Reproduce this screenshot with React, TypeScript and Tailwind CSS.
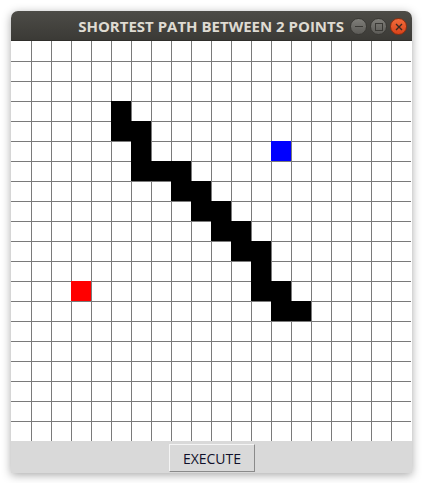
const SIZE = 20;

// filled cells: "col,row" -> colour
const filled: Record<string, string> = {};
const path: [number, number][] = [
  [5, 3],
  [5, 4], [6, 4],
  [6, 5],
  [6, 6], [7, 6], [8, 6],
  [8, 7], [9, 7],
  [9, 8], [10, 8],
  [10, 9], [11, 9],
  [11, 10], [12, 10],
  [12, 11],
  [12, 12], [13, 12],
  [13, 13], [14, 13],
];
path.forEach(([c, r]) => (filled[`${c},${r}`] = "black"));
filled["13,5"] = "blue";
filled["3,12"] = "red";

function Cell({ c, r }: { c: number; r: number }) {
  const fill = filled[`${c},${r}`];
  const color =
    fill === "black"
      ? "bg-black border-black"
      : fill === "blue"
      ? "bg-[#0000ff] border-[#0000ff]"
      : fill === "red"
      ? "bg-[#ff0000] border-[#ff0000]"
      : "bg-white border-[#7a7a7a]";
  return (
    <div
      className={`w-5 h-5 ${c > 0 ? "border-l" : ""} ${r > 0 ? "border-t" : ""} ${color}`}
    />
  );
}

export default function App() {
  const cells = [];
  for (let r = 0; r < SIZE; r++) {
    for (let c = 0; c < SIZE; c++) {
      cells.push(<Cell key={`${c}-${r}`} c={c} r={r} />);
    }
  }

  return (
    <div className="w-[425px] h-[483px] bg-white pt-[11px] pl-[11px] font-['Open_Sans',sans-serif]">
      <div className="w-[401px] flex flex-col shadow-[0_2px_10px_rgba(0,0,0,0.35)] rounded-t-[7px]">
        {/* title bar */}
        <div className="h-[30px] rounded-t-[7px] bg-gradient-to-b from-[#4d4c47] to-[#3b3a36] border-b border-[#2f2e2b] flex items-center justify-end pr-[5px]">
          <span className="text-[15px] font-bold text-[#dfdbd2] mr-[6px] mt-[1px]">
            SHORTEST PATH BETWEEN 2 POINTS
          </span>
          <div className="flex items-center gap-[3px] mt-[2px]">
            <div className="w-[17px] h-[17px] rounded-full bg-gradient-to-b from-[#7f7e79] to-[#5c5b57] border border-[#3a3935] flex items-center justify-center">
              <div className="w-[8px] h-[1.5px] bg-[#3a3935]" />
            </div>
            <div className="w-[17px] h-[17px] rounded-full bg-gradient-to-b from-[#7f7e79] to-[#5c5b57] border border-[#3a3935] flex items-center justify-center">
              <div className="w-[8px] h-[8px] border border-[#3a3935]" />
            </div>
            <div className="w-[17px] h-[17px] rounded-full bg-gradient-to-b from-[#f26b3a] to-[#d9431a] border border-[#8e2e10] flex items-center justify-center">
              <svg width="8" height="8" viewBox="0 0 8 8">
                <path d="M1 1L7 7M7 1L1 7" stroke="#3b2a22" strokeWidth="1.4" />
              </svg>
            </div>
          </div>
        </div>

        {/* grid */}
        <div className="bg-white">
          <div className="grid grid-cols-[repeat(20,20px)] w-[400px]">{cells}</div>
        </div>

        {/* bottom bar */}
        <div className="h-[32px] bg-[#d9d9d9] flex justify-center pt-[3px]">
          <button className="w-[86px] h-[28px] bg-[#d9d9d9] border border-t-[#f4f4f4] border-l-[#f4f4f4] border-r-[#8a8a8a] border-b-[#8a8a8a] text-[14px] text-[#10102a] font-['Open_Sans',sans-serif] ml-[1px]">
            EXECUTE
          </button>
        </div>
      </div>
    </div>
  );
}
